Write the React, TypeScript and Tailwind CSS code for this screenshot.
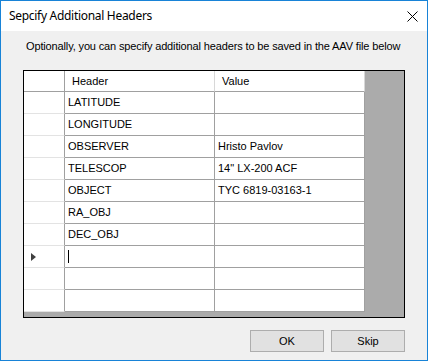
import React from 'react';

const rows: { name: string; value: string }[] = [
  { name: 'LATITUDE', value: '' },
  { name: 'LONGITUDE', value: '' },
  { name: 'OBSERVER', value: 'Hristo Pavlov' },
  { name: 'TELESCOP', value: '14" LX-200 ACF' },
  { name: 'OBJECT', value: 'TYC 6819-03163-1' },
  { name: 'RA_OBJ', value: '' },
  { name: 'DEC_OBJ', value: '' },
  { name: '', value: '' },
  { name: '', value: '' },
  { name: '', value: '' },
];

const CloseIcon = () => (
  <svg width="11" height="11" viewBox="0 0 11 11" className="block">
    <path d="M0.5 0.5 L10.5 10.5 M10.5 0.5 L0.5 10.5" stroke="#000" strokeWidth="1" />
  </svg>
);

const App: React.FC = () => {
  return (
    <div className="w-[428px] h-[361px] border border-[#1883d7] flex flex-col overflow-hidden">
      {/* title bar */}
      <div className="h-[30px] bg-white flex items-center justify-between pl-[8px] pr-[9px]">
        <span
          className="text-[12px] text-black tracking-[-0.3px]"
          style={{ fontFamily: '"Noto Sans", sans-serif' }}
        >
          Sepcify Additional Headers
        </span>
        <CloseIcon />
      </div>

      <div
        className="flex-1 bg-[#f0f0f0] flex flex-col text-[11px] text-black"
        style={{ fontFamily: '"Liberation Sans", Arial, sans-serif' }}
      >
        <p className="mt-[9px] pl-[25px] leading-[13px] tracking-[-0.14px]">
          Optionally, you can specify additional headers to be saved in the AAV file below
        </p>

        {/* grid */}
        <div className="mt-[17px] ml-[22px] w-[382px] h-[248px] border border-black bg-[#ababab] flex flex-col">
          <div className="flex h-[21px]">
            <div className="w-[41px] bg-white border-r border-b border-[#a0a0a0]" />
            <div className="w-[150px] bg-white border-r border-b border-r-[#d8d8d8] border-b-[#a0a0a0] pl-[7px] leading-[20px]">
              Header
            </div>
            <div className="w-[150px] bg-white border-r border-b border-r-[#d8d8d8] border-b-[#a0a0a0] pl-[7px] leading-[20px]">
              Value
            </div>
          </div>
          {rows.map((r, i) => (
            <div key={i} className="flex h-[22px]">
              <div className="w-[41px] bg-white border-r border-r-[#a0a0a0] border-b border-b-[#e3e3e3] flex items-center pl-[7px]">
                {i === 7 && (
                  <svg width="5" height="8" viewBox="0 0 5 8" className="block">
                    <path d="M0 0 L5 4 L0 8 Z" fill="#404040" />
                  </svg>
                )}
              </div>
              <div className="w-[150px] bg-white border-r border-b border-[#a0a0a0] pl-[3px] leading-[21px] flex items-center">
                {i === 7 ? <span className="block w-[1px] h-[13px] bg-black" /> : r.name}
              </div>
              <div className="w-[150px] bg-white border-r border-b border-[#a0a0a0] pl-[3px] leading-[21px]">
                {r.value}
              </div>
            </div>
          ))}
        </div>

        {/* buttons */}
        <div className="mt-[12px] flex justify-end gap-[7px] pr-[22px]">
          <button className="w-[74px] h-[22px] bg-[#e1e1e1] border border-[#adadad] leading-[20px] text-center">
            OK
          </button>
          <button className="w-[74px] h-[22px] bg-[#e1e1e1] border border-[#adadad] leading-[20px] text-center">
            Skip
          </button>
        </div>
      </div>
    </div>
  );
};

export default App;
